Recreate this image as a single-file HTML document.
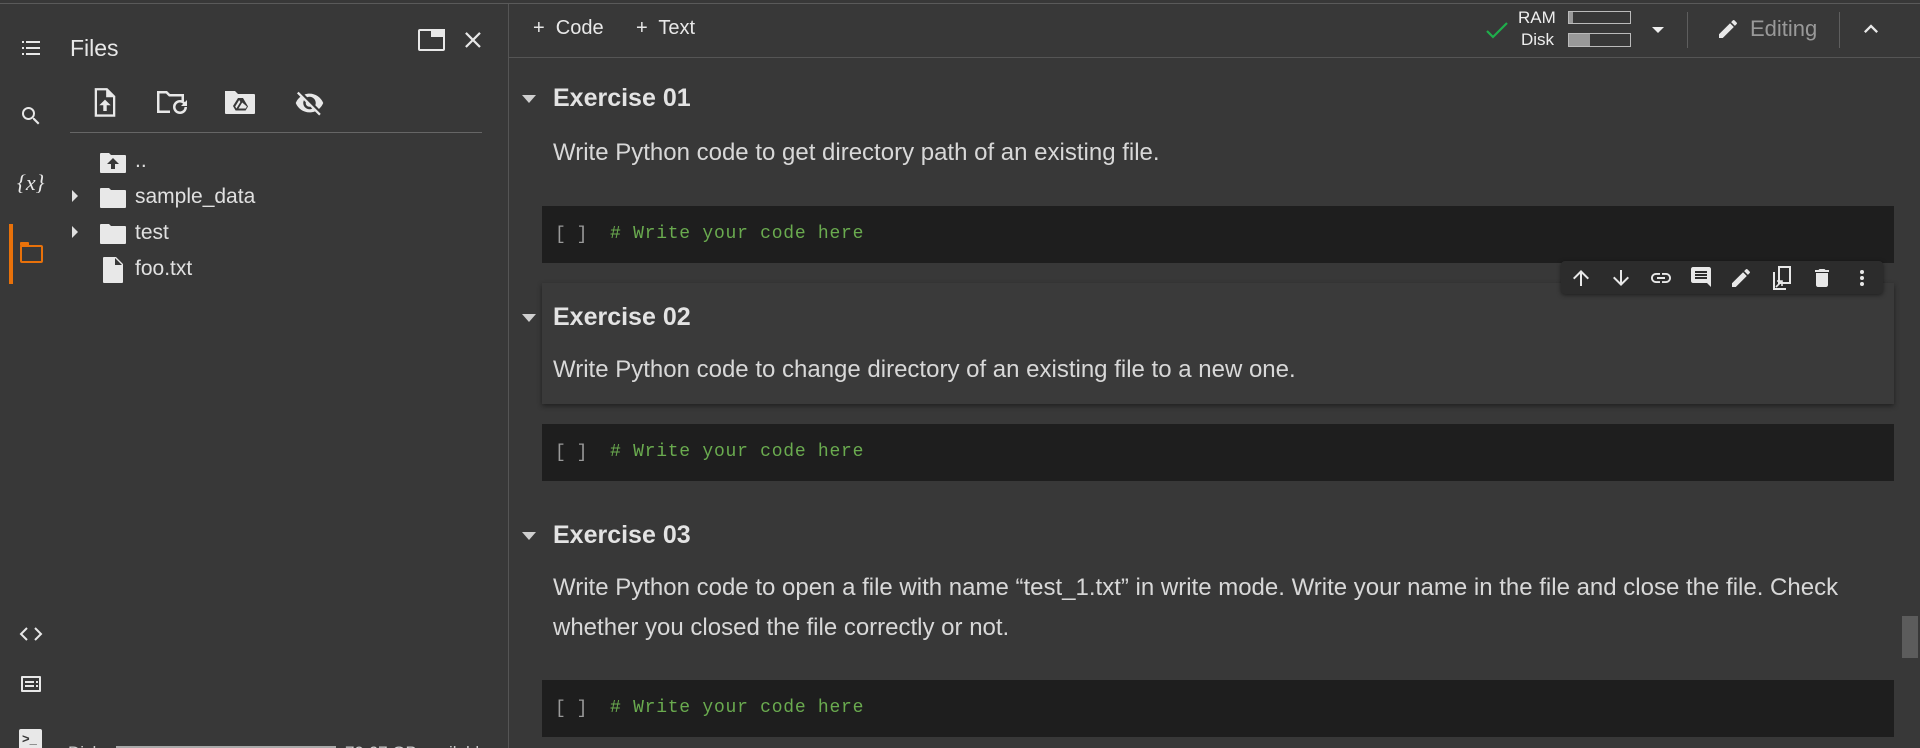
<!DOCTYPE html>
<html><head><meta charset="utf-8">
<style>
*{margin:0;padding:0;box-sizing:border-box}
html{width:1920px;height:748px;overflow:hidden}
body{width:1920px;height:748px;background:#383838;overflow:hidden;position:relative;font-family:"Liberation Sans",Arial,sans-serif;color:#d5d5d5}
.a{position:absolute}
.t{position:absolute;white-space:nowrap;line-height:1}
svg{position:absolute;fill:#e8e8e8}
.cell{position:absolute;left:542px;width:1352px;height:57px;background:#1e1e1e}
.br{position:absolute;left:13px;top:19px;font-family:"Liberation Mono",monospace;font-size:18px;color:#9a9a9a}
.cm{position:absolute;left:68px;top:18px;font-family:"Liberation Mono",monospace;font-size:18px;letter-spacing:0.75px;color:#6aab4f}
.h{font-size:25px;font-weight:bold;color:#e3e3e3}
.p{font-size:24px;color:#d8d8d8}
.ft{font-size:21px;color:#e0e0e0}
.tri{position:absolute;width:0;height:0;border-left:7px solid transparent;border-right:7px solid transparent;border-top:8px solid #cfcfcf}
</style></head><body>
<div class="a" style="left:0;top:3px;width:1920px;height:1px;background:#5a5a5a"></div>
<div class="a" style="left:508px;top:4px;width:1px;height:744px;background:#555"></div>
<div class="a" style="left:509px;top:57px;width:1411px;height:1px;background:#555"></div>

<!-- left rail -->
<svg style="left:19px;top:36px" width="24" height="24" viewBox="0 0 24 24"><path d="M3 5h2v2H3zM7 5h14v2H7zM3 11h2v2H3zM7 11h14v2H7zM3 17h2v2H3zM7 17h14v2H7z"/></svg>
<svg style="left:19px;top:104px" width="24" height="24" viewBox="0 0 24 24"><path d="M15.5 14h-.79l-.28-.27A6.47 6.47 0 0016 9.5 6.5 6.5 0 109.5 16c1.61 0 3.09-.59 4.23-1.57l.27.28v.79l5 4.99L20.49 19l-4.99-5zm-6 0C7.01 14 5 11.990 5 9.5S7.01 5 9.5 5 14 7.01 14 9.5 11.99 14 9.5 14z"/></svg>
<div class="t" style="left:17px;top:172px;font-family:'Liberation Serif',serif;font-size:22px;font-style:italic;color:#e8e8e8">{<i>x</i>}</div>
<div class="a" style="left:9px;top:224px;width:4px;height:60px;background:#e8710a"></div>
<div class="a" style="left:20px;top:245px;width:23px;height:18px;border:2px solid #e8710a;border-radius:2px"></div>
<div class="a" style="left:20px;top:242px;width:9px;height:4px;background:#e8710a;border-radius:1px"></div>
<svg style="left:18px;top:622px" width="26" height="24" viewBox="0 0 26 24"><path d="M9 6l-6 6 6 6M17 6l6 6-6 6" fill="none" stroke="#e8e8e8" stroke-width="2"/></svg>
<svg style="left:19px;top:672px" width="24" height="24" viewBox="0 0 24 24"><path d="M3 4h18a1 1 0 011 1v14a1 1 0 01-1 1H3a1 1 0 01-1-1V5a1 1 0 011-1zm1 2v12h16V6zm2 3h9v2H6zm11 0h2v2h-2zm-11 4h9v2H6zm11 0h2v2h-2z"/></svg>
<div class="a" style="left:19px;top:729px;width:23px;height:19px;background:#e8e8e8;border-radius:2px 2px 0 0"></div>
<div class="t" style="left:22px;top:732px;font-size:13px;font-weight:bold;color:#383838">&gt;_</div>

<!-- files panel -->
<div class="t" style="left:70px;top:37px;font-size:23px;color:#e8e8e8">Files</div>
<div class="a" style="left:418px;top:29px;width:27px;height:22px;border:2px solid #e8e8e8;border-radius:2px"></div>
<div class="a" style="left:431px;top:29px;width:14px;height:8px;background:#e8e8e8"></div>
<svg style="left:461px;top:28px" width="24" height="24" viewBox="0 0 24 24"><path d="M19 6.41L17.59 5 12 10.59 6.41 5 5 6.41 10.59 12 5 17.59 6.41 19 12 13.41 17.59 19 19 17.59 13.41 12z" transform="translate(-1.5 -1.5) scale(1.12)"/></svg>
<svg style="left:91px;top:87px" width="28" height="32" viewBox="0 0 24 28"><path d="M3 1h11l7 7v18H3zM5 3v21h14V9h-6V3z"/><path d="M12 11l-5 5h3.5v5h3v-5H17z"/></svg>
<svg style="left:155px;top:88px" width="34" height="30" viewBox="0 0 34 30"><path d="M2 3h10l3 3h14v7h-2.5V8.5H14L11 5.5H4.5v17H15V25H2z"/><path d="M25 12a7 7 0 107 7h-2.5a4.5 4.5 0 11-1.3-3.2L26 18h6v-6l-2.1 2.1A7 7 0 0025 12z"/></svg>
<svg style="left:224px;top:89px" width="32" height="28" viewBox="0 0 32 28"><path d="M1 2h10l3 3h16a1 1 0 011 1v18a1 1 0 01-1 1H2a1 1 0 01-1-1z"/><path fill="#383838" d="M14 9h5l5 8.5-2.4 4H11.6L9 17zm1.2 2l-4 6.5 1.2 2 4-6.5zm3 2.5L14.5 19.5h7.2l1.2-2z"/></svg>
<svg style="left:293px;top:88px" width="33" height="30" viewBox="0 0 24 24"><path d="M12 7c2.76 0 5 2.24 5 5 0 .65-.13 1.26-.36 1.83l2.92 2.92c1.51-1.26 2.7-2.89 3.43-4.75-1.73-4.39-6-7.5-11-7.5-1.4 0-2.74.25-3.98.7l2.16 2.16C10.74 7.13 11.35 7 12 7zM2 4.27l2.28 2.28.46.46A11.8 11.8 0 001 12c1.73 4.39 6 7.5 11 7.5 1.55 0 3.03-.3 4.38-.84l.42.42L19.73 22 21 20.73 3.27 3 2 4.27zM7.53 9.8l1.55 1.55c-.05.21-.08.43-.08.65 0 1.66 1.34 3 3 3 .22 0 .44-.03.65-.08l1.55 1.55c-.67.33-1.41.53-2.2.53-2.76 0-5-2.24-5-5 0-.79.2-1.53.53-2.2z"/></svg>
<div class="a" style="left:70px;top:132px;width:412px;height:1px;background:#666"></div>

<svg style="left:100px;top:152px" width="26" height="22" viewBox="0 0 26 22"><path d="M0 2a1 1 0 011-1h8l2 2h14a1 1 0 011 1v16a1 1 0 01-1 1H1a1 1 0 01-1-1z"/><path fill="#383838" d="M13 6l-6 6h4v5h4v-5h4z"/></svg>
<div class="t ft" style="left:135px;top:150px">..</div>
<div class="a" style="left:72px;top:190px;border-top:6px solid transparent;border-bottom:6px solid transparent;border-left:6px solid #e0e0e0"></div>
<svg style="left:100px;top:187px" width="26" height="22" viewBox="0 0 26 22"><path d="M0 2a1 1 0 011-1h8l2 2h14a1 1 0 011 1v16a1 1 0 01-1 1H1a1 1 0 01-1-1z"/></svg>
<div class="t ft" style="left:135px;top:186px">sample_data</div>
<div class="a" style="left:72px;top:226px;border-top:6px solid transparent;border-bottom:6px solid transparent;border-left:6px solid #e0e0e0"></div>
<svg style="left:100px;top:223px" width="26" height="22" viewBox="0 0 26 22"><path d="M0 2a1 1 0 011-1h8l2 2h14a1 1 0 011 1v16a1 1 0 01-1 1H1a1 1 0 01-1-1z"/></svg>
<div class="t ft" style="left:135px;top:222px">test</div>
<svg style="left:103px;top:257px" width="20" height="26" viewBox="0 0 20 26"><path d="M1 0h12l7 7v18a1 1 0 01-1 1H1a1 1 0 01-1-1V1a1 1 0 011-1zm11 1v7h7z"/></svg>
<div class="t ft" style="left:135px;top:258px">foo.txt</div>
<div class="t" style="left:68px;top:744px;font-size:17px;color:#ccc">Disk</div>
<div class="a" style="left:116px;top:746px;width:220px;height:2px;background:#aaa"></div>
<div class="t" style="left:345px;top:744px;font-size:17px;color:#ccc">79.67 GB available</div>

<!-- top toolbar -->
<div class="t" style="left:533px;top:18px;font-size:20px;color:#e8e8e8">+&nbsp; Code</div>
<div class="t" style="left:636px;top:18px;font-size:20px;color:#e8e8e8">+&nbsp; Text</div>
<svg style="left:1484px;top:19px" width="26" height="24" viewBox="0 0 24 24"><path fill="none" stroke="#1fae4b" stroke-width="2.2" d="M2 12l6 6L22 4"/></svg>
<div class="t" style="left:1518px;top:9px;font-size:17px;color:#eee">RAM</div>
<div class="t" style="left:1521px;top:31px;font-size:17px;color:#eee">Disk</div>
<div class="a" style="left:1568px;top:11px;width:63px;height:13px;border:1px solid #bbb"></div>
<div class="a" style="left:1569px;top:12px;width:4px;height:11px;background:#999"></div>
<div class="a" style="left:1568px;top:33px;width:63px;height:14px;border:1px solid #bbb"></div>
<div class="a" style="left:1569px;top:34px;width:21px;height:12px;background:#999"></div>
<div class="a" style="left:1652px;top:27px;border-left:6px solid transparent;border-right:6px solid transparent;border-top:6px solid #eee"></div>
<div class="a" style="left:1687px;top:12px;width:1px;height:36px;background:#5e5e5e"></div>
<svg style="left:1716px;top:17px" width="24" height="24" viewBox="0 0 24 24"><path d="M3 17.25V21h3.75L17.81 9.94l-3.75-3.75L3 17.25zM20.71 7.04a1 1 0 000-1.41l-2.34-2.34a1 1 0 00-1.41 0l-1.83 1.83 3.75 3.75 1.83-1.83z"/></svg>
<div class="t" style="left:1750px;top:18px;font-size:22px;color:#999">Editing</div>
<div class="a" style="left:1839px;top:12px;width:1px;height:36px;background:#5e5e5e"></div>
<svg style="left:1857px;top:15px" width="28" height="28" viewBox="0 0 24 24"><path d="M7.41 15.41L12 10.83l4.59 4.58L18 14l-6-6-6 6z"/></svg>

<!-- Exercise 01 -->
<div class="tri" style="left:522px;top:95px"></div>
<div class="t h" style="left:553px;top:86px">Exercise 01</div>
<div class="t p" style="left:553px;top:141px">Write Python code to get directory path of an existing file.</div>
<div class="cell" style="top:206px"><span class="br">[ ]</span><span class="cm"># Write your code here</span></div>

<!-- Exercise 02 -->
<div class="a" style="left:542px;top:283px;width:1352px;height:121px;background:#3a3a3a;box-shadow:0 2px 5px rgba(0,0,0,.45)"></div>
<div class="tri" style="left:522px;top:314px"></div>
<div class="t h" style="left:553px;top:305px">Exercise 02</div>
<div class="t p" style="left:553px;top:358px">Write Python code to change directory of an existing file to a new one.</div>
<div class="a" style="left:1561px;top:261px;width:322px;height:33px;background:#2c2c2c;border-radius:4px;box-shadow:0 1px 4px rgba(0,0,0,.5)"></div>
<svg style="left:1569px;top:266px" width="24" height="24" viewBox="0 0 24 24"><path d="M4 12l1.41 1.41L11 7.83V20h2V7.83l5.58 5.59L20 12l-8-8-8 8z"/></svg>
<svg style="left:1609px;top:266px" width="24" height="24" viewBox="0 0 24 24"><path d="M20 12l-1.41-1.41L13 16.17V4h-2v12.17l-5.58-5.59L4 12l8 8 8-8z"/></svg>
<svg style="left:1649px;top:266px" width="24" height="24" viewBox="0 0 24 24"><path d="M3.9 12c0-1.71 1.39-3.1 3.1-3.1h4V7H7c-2.76 0-5 2.24-5 5s2.24 5 5 5h4v-1.9H7c-1.71 0-3.1-1.39-3.1-3.1zM8 13h8v-2H8v2zm9-6h-4v1.9h4c1.71 0 3.1 1.39 3.1 3.1s-1.39 3.1-3.1 3.1h-4V17h4c2.76 0 5-2.24 5-5s-2.24-5-5-5z"/></svg>
<svg style="left:1689px;top:265px" width="24" height="24" viewBox="0 0 24 24"><path d="M21.99 4c0-1.1-.89-2-1.99-2H4c-1.1 0-2 .9-2 2v12c0 1.1.9 2 2 2h14l4 4-.01-18zM18 14H6v-2h12v2zm0-3H6V9h12v2zm0-3H6V6h12v2z"/></svg>
<svg style="left:1729px;top:266px" width="24" height="24" viewBox="0 0 24 24"><path d="M3 17.25V21h3.75L17.81 9.94l-3.75-3.75L3 17.25zM20.71 7.04a1 1 0 000-1.41l-2.34-2.34a1 1 0 00-1.41 0l-1.83 1.83 3.75 3.75 1.83-1.83z"/></svg>
<svg style="left:1770px;top:265px" width="24" height="26" viewBox="0 0 24 26"><path d="M8 1h13v18H8zm2 2v14h9V3zM3 7h2v16h11v2H3z"/><path d="M6 22l6-6m-5 0h5v5" fill="none" stroke="#e8e8e8" stroke-width="1.6"/></svg>
<svg style="left:1810px;top:266px" width="24" height="24" viewBox="0 0 24 24"><path d="M6 19c0 1.1.9 2 2 2h8c1.1 0 2-.9 2-2V7H6v12zM19 4h-3.5l-1-1h-5l-1 1H5v2h14V4z"/></svg>
<svg style="left:1850px;top:266px" width="24" height="24" viewBox="0 0 24 24"><path d="M12 8a2 2 0 100-4 2 2 0 000 4zm0 2a2 2 0 100 4 2 2 0 000-4zm0 6a2 2 0 100 4 2 2 0 000-4z"/></svg>
<div class="cell" style="top:424px"><span class="br">[ ]</span><span class="cm"># Write your code here</span></div>

<!-- Exercise 03 -->
<div class="tri" style="left:522px;top:532px"></div>
<div class="t h" style="left:553px;top:523px">Exercise 03</div>
<div class="t p" style="left:553px;top:576px">Write Python code to open a file with name “test_1.txt” in write mode. Write your name in the file and close the file. Check</div>
<div class="t p" style="left:553px;top:616px">whether you closed the file correctly or not.</div>
<div class="cell" style="top:680px"><span class="br">[ ]</span><span class="cm"># Write your code here</span></div>

<div class="a" style="left:1902px;top:616px;width:16px;height:42px;background:#5c5c5c"></div>
</body></html>
